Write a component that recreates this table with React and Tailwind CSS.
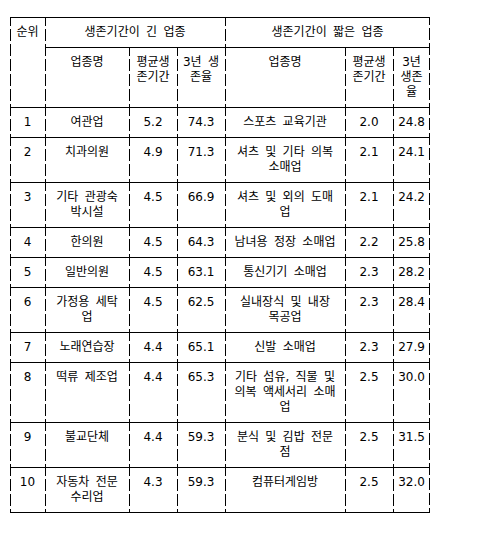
const vline =
  "bg-[image:linear-gradient(to_bottom,#000_12px,transparent_12px)] bg-[length:1px_15px] bg-repeat-y bg-[position:0_-4px]";

const rows = [
  ["1", "여관업", "5.2", "74.3", "스포츠 교육기관", "2.0", "24.8"],
  ["2", "치과의원", "4.9", "71.3", ["셔츠 및 기타 의복", "소매업"], "2.1", "24.1"],
  ["3", ["기타 관광숙", "박시설"], "4.5", "66.9", ["셔츠 및 외의 도매", "업"], "2.1", "24.2"],
  ["4", "한의원", "4.5", "64.3", "남녀용 정장 소매업", "2.2", "25.8"],
  ["5", "일반의원", "4.5", "63.1", "통신기기 소매업", "2.3", "28.2"],
  ["6", ["가정용 세탁", "업"], "4.5", "62.5", ["실내장식 및 내장", "목공업"], "2.3", "28.4"],
  ["7", "노래연습장", "4.4", "65.1", "신발 소매업", "2.3", "27.9"],
  ["8", "떡류 제조업", "4.4", "65.3", ["기타 섬유, 직물 및", "의복 액세서리 소매", "업"], "2.5", "30.0"],
  ["9", "불교단체", "4.4", "59.3", ["분식 및 김밥 전문", "점"], "2.5", "31.5"],
  ["10", ["자동차 전문", "수리업"], "4.3", "59.3", "컴퓨터게임방", "2.5", "32.0"],
];

function Lines({ value }) {
  const lines = Array.isArray(value) ? value : [value];
  return lines.map((l, i) => (
    <span key={i} className="block whitespace-nowrap">
      {l}
    </span>
  ));
}

function Cell({ children, className = "", ...rest }) {
  return (
    <td
      {...rest}
      className={`${vline} border-b border-black px-0.5 pt-[7px] pb-[7px] text-center align-top ${className}`}
    >
      {children}
    </td>
  );
}

export default function App() {
  return (
    <div className="min-h-[560px] bg-white pl-[10px] pt-[17px] text-[12px] leading-[15px] text-black [word-spacing:2.5px] font-['DejaVu_Sans','Noto_Sans_CJK_KR',sans-serif]">
      <table className="w-[420px] table-fixed border-separate border-spacing-0 bg-[image:linear-gradient(to_bottom,#000_12px,transparent_12px)] bg-[length:1px_15px] bg-repeat-y bg-[position:100%_-4px]">
        <colgroup>
          <col className="w-[35px]" />
          <col className="w-[84px]" />
          <col className="w-[48px]" />
          <col className="w-[48px]" />
          <col className="w-[120px]" />
          <col className="w-[48px]" />
          <col className="w-[37px]" />
        </colgroup>
        <thead>
          <tr>
            <Cell rowSpan={2} className="border-t">
              순위
            </Cell>
            <Cell colSpan={3} className="border-t">
              생존기간이 긴 업종
            </Cell>
            <Cell colSpan={3} className="border-t">
              생존기간이 짧은 업종
            </Cell>
          </tr>
          <tr>
            <Cell>업종명</Cell>
            <Cell>
              <Lines value={["평균생", "존기간"]} />
            </Cell>
            <Cell>
              <Lines value={["3년 생", "존율"]} />
            </Cell>
            <Cell>업종명</Cell>
            <Cell>
              <Lines value={["평균생", "존기간"]} />
            </Cell>
            <Cell>
              <Lines value={["3년", "생존", "율"]} />
            </Cell>
          </tr>
        </thead>
        <tbody>
          {rows.map((r) => (
            <tr key={r[0]}>
              {r.map((v, i) => (
                <Cell key={i}>
                  <Lines value={v} />
                </Cell>
              ))}
            </tr>
          ))}
        </tbody>
      </table>
    </div>
  );
}
